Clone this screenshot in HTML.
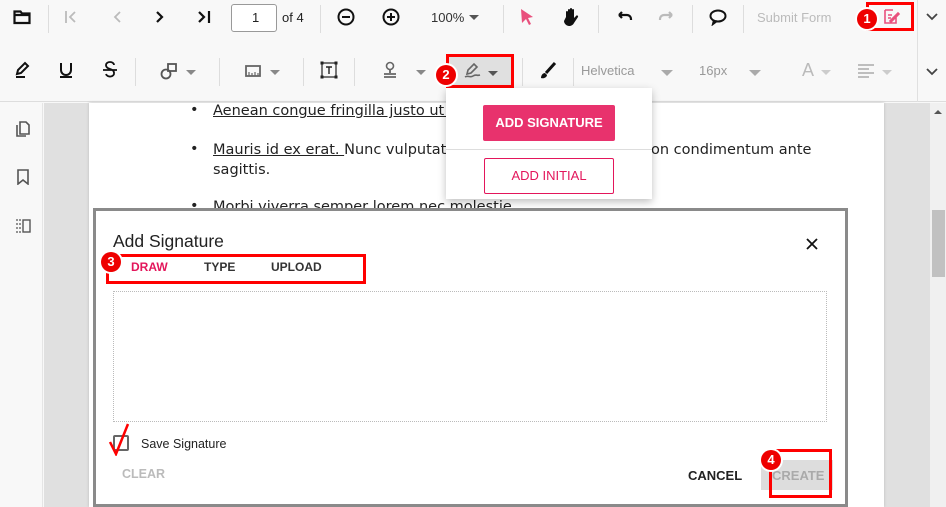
<!DOCTYPE html>
<html style="overflow:hidden;width:946px;height:507px"><head><meta charset="utf-8"><style>
*{margin:0;padding:0;box-sizing:border-box}
body{width:946px;height:507px;overflow:hidden;position:relative;background:#f8f8f8;font-family:"Liberation Sans",sans-serif;color:#222}
.a{position:absolute}
.sep{position:absolute;width:1px;height:28px;background:#ddd}
.ic{position:absolute}
.t{position:absolute;white-space:nowrap}
.red{position:absolute;border:3px solid #f00}
.badge{position:absolute;width:20px;height:20px;border-radius:50%;background:#e00;color:#fff;font:bold 13px "Liberation Sans",sans-serif;text-align:center;line-height:20px;box-shadow:0 0 0 2px #fff}
.caret{position:absolute;width:0;height:0;border-left:5px solid transparent;border-right:5px solid transparent;border-top:5px solid #888}
.doc{font-family:"DejaVu Sans",sans-serif;font-size:14.5px;color:#222}
</style></head><body>
<div class="a" style="left:0;top:0;width:946px;height:102px;background:#f8f8f8;border-bottom:1px solid #ddd"></div>
<div class="a" style="left:917px;top:0;width:1px;height:102px;background:#e0e0e0"></div>
<svg class="ic" style="left:13px;top:9px" width="18" height="16" viewBox="0 0 18 16"><path d="M1.5 2.5h6l1.5 2h7.5v9.5h-15z M1.5 6h15" fill="none" stroke="#111" stroke-width="2.2"/></svg>
<div class="sep" style="left:48px;top:5px"></div>
<svg class="ic" style="left:64px;top:10px" width="14" height="14"><path d="M2 1v12M11 2l-5 5 5 5" fill="none" stroke="#bbb" stroke-width="1.8"/></svg>
<svg class="ic" style="left:110px;top:10px" width="14" height="14"><path d="M10 2l-5 5 5 5" fill="none" stroke="#bbb" stroke-width="1.8"/></svg>
<svg class="ic" style="left:153px;top:10px" width="14" height="14"><path d="M4 2l5 5-5 5" fill="none" stroke="#111" stroke-width="2.2"/></svg>
<svg class="ic" style="left:197px;top:10px" width="16" height="14"><path d="M2 2l5 5-5 5M12 1v12" fill="none" stroke="#111" stroke-width="2.2"/></svg>
<div class="a" style="left:231px;top:4px;width:46px;height:28px;border:1px solid #999;border-radius:3px;background:#fff"></div>
<div class="t" style="left:252px;top:10px;font-size:13px">1</div>
<div class="t" style="left:282px;top:10px;font-size:13px">of 4</div>
<div class="sep" style="left:320px;top:5px"></div>
<svg class="ic" style="left:337px;top:8px" width="18" height="18"><circle cx="9" cy="9" r="7.5" fill="none" stroke="#111" stroke-width="2"/><path d="M5 9h8" stroke="#111" stroke-width="2"/></svg>
<svg class="ic" style="left:382px;top:8px" width="18" height="18"><circle cx="9" cy="9" r="7.5" fill="none" stroke="#111" stroke-width="2"/><path d="M5 9h8M9 5v8" stroke="#111" stroke-width="2"/></svg>
<div class="t" style="left:431px;top:10px;font-size:13px;color:#333">100%</div>
<div class="caret" style="left:469px;top:15px;border-top-color:#555"></div>
<div class="sep" style="left:503px;top:5px"></div>
<svg class="ic" style="left:520px;top:8px" width="14" height="18"><path d="M1 1l12 8-5 1 3 6-2 1-3-6-4 4z" fill="#e9507d"/></svg>
<svg class="ic" style="left:563px;top:7px" width="18" height="20"><path d="M3 10V5a1 1 0 012 0v4V3a1 1 0 012 0v6V2a1 1 0 012 0v7V3a1 1 0 012 0v8l2-2a1 1 0 012 1l-4 6c-1 2-3 3-5 3s-5-2-5-5z" fill="#111"/></svg>
<div class="sep" style="left:598px;top:5px"></div>
<svg class="ic" style="left:615px;top:10px" width="18" height="12"><path d="M4 5h8a4 4 0 014 4v1M4 5l3-3M4 5l3 3" fill="none" stroke="#111" stroke-width="2.2"/></svg>
<svg class="ic" style="left:658px;top:10px" width="18" height="12"><path d="M14 5H6a4 4 0 00-4 4v1M14 5l-3-3M14 5l-3 3" fill="none" stroke="#bbb" stroke-width="2.2"/></svg>
<div class="sep" style="left:692px;top:5px"></div>
<svg class="ic" style="left:709px;top:8px" width="18" height="18"><ellipse cx="9" cy="8" rx="7.5" ry="5.5" fill="none" stroke="#111" stroke-width="2"/><path d="M5 12l-1 4 4-3" fill="none" stroke="#111" stroke-width="2"/></svg>
<div class="sep" style="left:743px;top:5px"></div>
<div class="t" style="left:757px;top:10px;font-size:13px;color:#bbb">Submit Form</div>
<svg class="ic" style="left:883px;top:8px" width="18" height="18"><path d="M2 2h8M2 2v13h11V9M5 7h4M5 10h3M7 13l8-8 1 1-8 8z" fill="none" stroke="#e9507d" stroke-width="1.6"/></svg>
<div class="red" style="left:866px;top:2px;width:48px;height:29px"></div>
<div class="badge" style="left:857px;top:9px">1</div>
<svg class="ic" style="left:925px;top:12px" width="14" height="10"><path d="M2 2l5 5 5-5" fill="none" stroke="#444" stroke-width="1.8"/></svg>
<svg class="ic" style="left:14px;top:61px" width="16" height="18"><path d="M3 13l1-4 7-7 3 3-7 7zM2 16h9" fill="none" stroke="#111" stroke-width="2"/></svg>
<svg class="ic" style="left:58px;top:61px" width="16" height="18"><path d="M3 2v7a5 5 0 0010 0V2M2 16h12" fill="none" stroke="#111" stroke-width="2"/></svg>
<svg class="ic" style="left:102px;top:61px" width="16" height="18"><path d="M12 4a4 3 0 00-8 0c0 5 8 3 8 8a4 3 0 01-8 1M1 9h14" fill="none" stroke="#111" stroke-width="1.8"/></svg>
<div class="sep" style="left:135px;top:58px"></div>
<svg class="ic" style="left:160px;top:62px" width="18" height="18"><circle cx="6" cy="12" r="4.5" fill="none" stroke="#555" stroke-width="1.8"/><rect x="8" y="2" width="8" height="7" fill="none" stroke="#555" stroke-width="1.8"/></svg>
<div class="caret" style="left:186px;top:70px"></div>
<div class="sep" style="left:219px;top:58px"></div>
<svg class="ic" style="left:245px;top:65px" width="16" height="12"><rect x="1" y="1" width="14" height="10" fill="none" stroke="#666" stroke-width="1.8"/><path d="M4 11V7M7 11V8M10 11V7M13 11V8" stroke="#666" stroke-width="1.2"/></svg>
<div class="caret" style="left:270px;top:70px"></div>
<div class="sep" style="left:303px;top:58px"></div>
<svg class="ic" style="left:320px;top:61px" width="18" height="18"><rect x="2" y="2" width="14" height="14" fill="none" stroke="#222" stroke-width="1.2"/><rect x="0.5" y="0.5" width="3" height="3" fill="#222"/><rect x="14.5" y="0.5" width="3" height="3" fill="#222"/><rect x="0.5" y="14.5" width="3" height="3" fill="#222"/><rect x="14.5" y="14.5" width="3" height="3" fill="#222"/><path d="M6 6h6M9 6v7" stroke="#222" stroke-width="1.4"/></svg>
<div class="sep" style="left:354px;top:58px"></div>
<svg class="ic" style="left:381px;top:61px" width="18" height="18"><circle cx="9" cy="5" r="3.5" fill="none" stroke="#666" stroke-width="1.6"/><path d="M9 8v4M3 13h12M3 16h12" stroke="#666" stroke-width="1.8"/></svg>
<div class="caret" style="left:416px;top:70px"></div>
<div class="a" style="left:447px;top:55px;width:66px;height:32px;background:#e0e0e0"></div>
<svg class="ic" style="left:464px;top:63px" width="18" height="16"><path d="M3 11l1-4 6-6 3 3-6 6zM1 14c3-2 5 1 8-1s4 0 7-1" fill="none" stroke="#666" stroke-width="1.6"/></svg>
<div class="caret" style="left:488px;top:71px;border-top-color:#555"></div>
<div class="red" style="left:446px;top:54px;width:68px;height:34px"></div>
<div class="badge" style="left:436px;top:65px">2</div>
<div class="sep" style="left:522px;top:58px"></div>
<svg class="ic" style="left:539px;top:62px" width="18" height="18"><path d="M16 1L7 11" stroke="#111" stroke-width="3"/><path d="M2 16c0-3 2-5 4-5l2 2c0 2-3 4-6 3z" fill="#111"/></svg>
<div class="sep" style="left:573px;top:58px"></div>
<div class="t" style="left:581px;top:63px;font-size:13px;color:#999">Helvetica</div>
<div class="caret" style="left:661px;top:70px;border-left-width:6px;border-right-width:6px;border-top-width:6px;border-top-color:#aaa"></div>
<div class="t" style="left:699px;top:63px;font-size:13px;color:#999">16px</div>
<div class="caret" style="left:749px;top:70px;border-left-width:6px;border-right-width:6px;border-top-width:6px;border-top-color:#aaa"></div>
<div class="t" style="left:802px;top:60px;font-size:18px;color:#bbb">A</div>
<div class="caret" style="left:821px;top:70px;border-top-color:#ccc"></div>
<svg class="ic" style="left:857px;top:63px" width="18" height="16"><path d="M1 2h16M1 6h11M1 10h16M1 14h11" stroke="#aaa" stroke-width="1.6"/></svg>
<div class="caret" style="left:882px;top:70px;border-top-color:#ccc"></div>
<svg class="ic" style="left:925px;top:67px" width="14" height="10"><path d="M2 2l5 5 5-5" fill="none" stroke="#444" stroke-width="1.8"/></svg>
<div class="a" style="left:0;top:103px;width:43px;height:404px;background:#f8f8f8;border-right:1px solid #e5e5e5"></div>
<svg class="ic" style="left:16px;top:121px" width="14" height="16"><path d="M4 1h6l3 3v9H4z" fill="none" stroke="#555" stroke-width="1.6"/><path d="M1 4v11h9" fill="none" stroke="#555" stroke-width="1.6"/></svg>
<svg class="ic" style="left:17px;top:169px" width="12" height="16"><path d="M1 1h10v14l-5-4-5 4z" fill="none" stroke="#555" stroke-width="1.6"/></svg>
<svg class="ic" style="left:15px;top:219px" width="16" height="14"><path d="M1 1h5M1 5h5M1 9h5M1 13h5" stroke="#555" stroke-width="1.2" stroke-dasharray="2 1"/><rect x="8" y="1" width="7" height="12" fill="none" stroke="#555" stroke-width="1.4"/></svg>
<div class="a" style="left:44px;top:103px;width:886px;height:404px;background:#e0e0e0"></div>
<div class="a" style="left:89px;top:103px;width:795px;height:404px;background:#fff;box-shadow:0 0 3px #bbb"></div>
<div class="a" style="left:930px;top:103px;width:16px;height:404px;background:#f0f0f0"></div>
<div class="a" style="left:932px;top:210px;width:13px;height:67px;background:#c1c1c1"></div>
<div class="caret" style="left:934px;top:110px;border-top:none;border-bottom:4px solid #555;border-left-width:4px;border-right-width:4px"></div>
<div class="t doc" style="left:190px;top:102px">•</div>
<div class="t doc" style="left:213px;top:103px"><u>Aenean congue fringilla justo ut a</u></div>
<div class="t doc" style="left:190px;top:141px">•</div>
<div class="t doc" style="left:213px;top:142px"><u>Mauris id ex erat. </u>Nunc vulputate</div>
<div class="t doc" style="left:651px;top:142px">on condimentum ante</div>
<div class="t doc" style="left:213px;top:162px">sagittis.</div>
<div class="t doc" style="left:190px;top:198px">•</div>
<div class="t doc" style="left:213px;top:199px">Morbi viverra semper lorem nec molestie</div>
<div class="a" style="left:446px;top:88px;width:206px;height:111px;background:#fff;box-shadow:0 3px 8px rgba(0,0,0,.25)"></div>
<div class="a" style="left:446px;top:149px;width:206px;height:1px;background:#ddd"></div>
<div class="a" style="left:483px;top:105px;width:132px;height:36px;background:#e8326d;border-radius:2px;color:#fff;font:bold 13px 'Liberation Sans',sans-serif;text-align:center;line-height:36px">ADD SIGNATURE</div>
<div class="a" style="left:484px;top:158px;width:130px;height:36px;border:1px solid #e3165b;border-radius:2px;color:#e3165b;font:13px 'Liberation Sans',sans-serif;text-align:center;line-height:34px">ADD INITIAL</div>
<div class="a" style="left:93px;top:208px;width:755px;height:299px;background:#fff;border:3px solid #8a8a8a;border-bottom:none"></div>
<div class="a" style="left:93px;top:504px;width:755px;height:3px;background:#8a8a8a"></div>
<div class="t" style="left:113px;top:231px;font-size:17.5px;color:#222">Add Signature</div>
<svg class="ic" style="left:805px;top:237px" width="14" height="14"><path d="M2 2l10 10M12 2L2 12" stroke="#111" stroke-width="1.8"/></svg>
<div class="t" style="left:131px;top:260px;font:bold 12px 'Liberation Sans',sans-serif;color:#e3165b">DRAW</div>
<div class="t" style="left:204px;top:260px;font:bold 12px 'Liberation Sans',sans-serif;color:#333">TYPE</div>
<div class="t" style="left:271px;top:260px;font:bold 12px 'Liberation Sans',sans-serif;color:#333">UPLOAD</div>
<div class="red" style="left:106px;top:254px;width:260px;height:30px"></div>
<div class="badge" style="left:101px;top:252px">3</div>
<div class="a" style="left:113px;top:291px;width:714px;height:131px;border:1px dotted #bbb"></div>
<div class="a" style="left:113px;top:435px;width:16px;height:16px;border:2px solid #666;border-radius:2px"></div>
<svg class="ic" style="left:108px;top:422px" width="24" height="34"><path d="M2 20l6 12L20 2" fill="none" stroke="#f00" stroke-width="2.5"/></svg>
<div class="t" style="left:141px;top:437px;font-size:12.5px;color:#222">Save Signature</div>
<div class="t" style="left:122px;top:467px;font:bold 12.5px 'Liberation Sans',sans-serif;color:#bbb">CLEAR</div>
<div class="t" style="left:688px;top:468px;font:bold 13px 'Liberation Sans',sans-serif;color:#222">CANCEL</div>
<div class="a" style="left:761px;top:460px;width:72px;height:30px;background:#ddd"></div>
<div class="t" style="left:772px;top:468px;font:bold 13px 'Liberation Sans',sans-serif;color:#aaa">CREATE</div>
<div class="red" style="left:769px;top:449px;width:63px;height:49px"></div>
<div class="badge" style="left:761px;top:450px">4</div>
</body></html>
